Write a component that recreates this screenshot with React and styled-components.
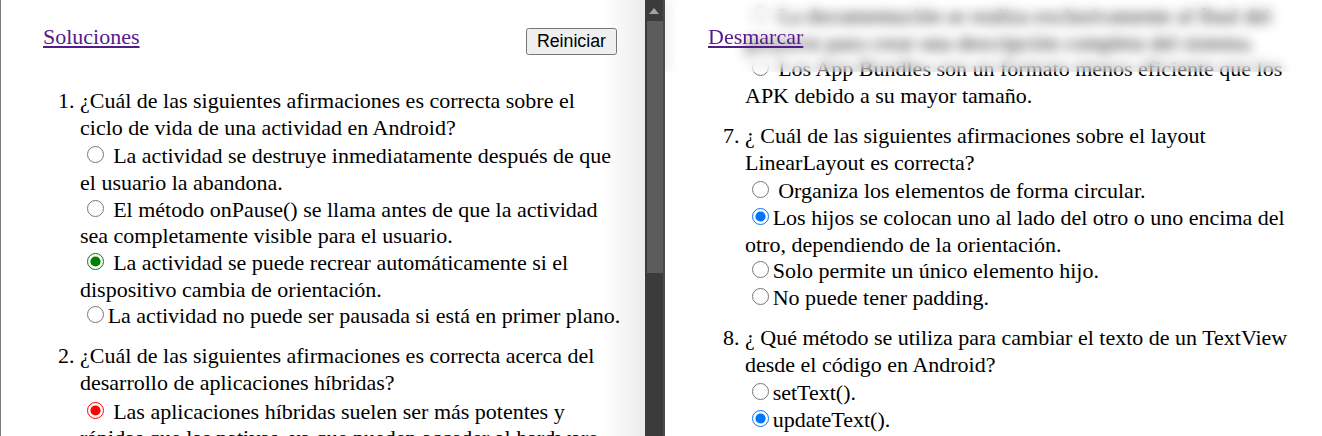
import React from "react";
import styled, { createGlobalStyle } from "styled-components";

const GlobalStyle = createGlobalStyle`
  html, body {
    margin: 0;
    padding: 0;
    background: #ffffff;
    overflow: hidden;
  }
  body {
    font-family: "Liberation Serif", "Times New Roman", serif;
    color: #000;
  }
`;

const Page = styled.div`
  display: flex;
  width: 1322px;
  height: 436px;
  overflow: hidden;
  background: #fff;
`;

const LeftPane = styled.section`
  flex: 0 0 645px;
  box-sizing: border-box;
  height: 100%;
  overflow: hidden;
  border-left: 1px solid #7d7d7d;
  padding: 0 24px 0 42px;
  background: linear-gradient(to right, #ffffff calc(100% - 42px), #ebebeb);
`;

const HeaderRow = styled.div`
  display: flex;
  justify-content: space-between;
  align-items: flex-start;
  padding: 24px 4px 0 0;
`;

const TextLink = styled.a`
  font-size: 22px;
  line-height: 26.67px;
  color: #551a8b;
  text-decoration: underline;
  cursor: pointer;
`;

const ResetButton = styled.button`
  margin-top: 4px;
  height: 27px;
  padding: 0 10px;
  font-family: "Liberation Sans", Arial, sans-serif;
  font-size: 17.78px;
  color: #000;
  background: #efefef;
  border: 1.33px solid #767676;
  border-radius: 2.67px;
`;

const QuestionList = styled.ol`
  margin: ${(p) => p.$top}px 0 0 0;
  padding-left: 37px;
  font-size: 22px;
  line-height: 26.67px;
`;

const Question = styled.li`
  margin-bottom: 13.33px;
  list-style: ${(p) => (p.$continued ? "none" : "decimal")};
`;

const Prompt = styled.div`
  margin-bottom: 2px;
`;

const Option = styled.label`
  display: block;
`;

const Radio = styled.input.attrs({ type: "radio" })`
  width: 17px;
  height: 17px;
  margin: 3px 4px 0 6.67px;
  accent-color: ${(p) => p.$accent || "auto"};
`;

const Scrollbar = styled.div`
  flex: 0 0 20px;
  display: flex;
  flex-direction: column;
  align-items: center;
  background: #3b3b3b;
  box-sizing: border-box;
  border-right: 2px solid #4a4a4a;
`;

const ArrowButton = styled.div`
  flex: 0 0 21px;
  width: 100%;
  display: flex;
  align-items: center;
  justify-content: center;
`;

const Thumb = styled.div`
  width: 16px;
  height: 252px;
  margin-left: 2px;
  background: #5c5c5c;
`;

const RightPane = styled.section`
  flex: 1 1 auto;
  position: relative;
  height: 100%;
  overflow: hidden;
  box-sizing: border-box;
  padding: 0 4px 0 43px;
`;

const BlurHeader = styled.div`
  position: absolute;
  top: 0;
  left: 0;
  right: 0;
  height: 72px;
  box-sizing: border-box;
  padding: 24px 0 0 43px;
  background: rgba(255, 255, 255, 0.08);
  backdrop-filter: blur(6px);
  -webkit-backdrop-filter: blur(6px);
  z-index: 2;
`;

const left = [
  {
    text: "¿Cuál de las siguientes afirmaciones es correcta sobre el ciclo de vida de una actividad en Android?",
    options: [
      { t: "La actividad se destruye inmediatamente después de que el usuario la abandona.", sp: true },
      { t: "El método onPause() se llama antes de que la actividad sea completamente visible para el usuario.", sp: true },
      { t: "La actividad se puede recrear automáticamente si el dispositivo cambia de orientación.", sp: true, checked: true, accent: "#008000" },
      { t: "La actividad no puede ser pausada si está en primer plano." },
    ],
  },
  {
    text: "¿Cuál de las siguientes afirmaciones es correcta acerca del desarrollo de aplicaciones híbridas?",
    options: [
      { t: "Las aplicaciones híbridas suelen ser más potentes y rápidas que las nativas, ya que pueden acceder al hardware del dispositivo sin restricciones.", sp: true, checked: true, accent: "#ff0000" },
      { t: "Las aplicaciones híbridas combinan tecnologías web con un contenedor nativo.", sp: true },
    ],
  },
];

const right = [
  {
    continued: true,
    options: [
      { t: "La documentación se realiza exclusivamente al final del proyecto para crear una descripción completa del sistema.", sp: true },
      { t: "Los App Bundles son un formato menos eficiente que los APK debido a su mayor tamaño.", sp: true },
    ],
  },
  {
    text: "¿ Cuál de las siguientes afirmaciones sobre el layout LinearLayout es correcta?",
    options: [
      { t: "Organiza los elementos de forma circular.", sp: true },
      { t: "Los hijos se colocan uno al lado del otro o uno encima del otro, dependiendo de la orientación.", checked: true },
      { t: "Solo permite un único elemento hijo." },
      { t: "No puede tener padding." },
    ],
  },
  {
    text: "¿ Qué método se utiliza para cambiar el texto de un TextView desde el código en Android?",
    options: [
      { t: "setText()." },
      { t: "updateText().", checked: true },
      { t: "changeText()." },
      { t: "modifyText()." },
    ],
  },
];

function QuestionItem({ q, name, value }) {
  return (
    <Question $continued={q.continued} value={value}>
      {q.text && <Prompt>{q.text}</Prompt>}
      {q.options.map((o, i) => (
        <Option key={i}>
          <Radio name={name} defaultChecked={!!o.checked} $accent={o.accent} />
          {o.sp ? " " : ""}
          {o.t}
        </Option>
      ))}
    </Question>
  );
}

export default function App() {
  return (
    <>
      <GlobalStyle />
      <Page>
        <LeftPane>
          <HeaderRow>
            <TextLink href="#soluciones">Soluciones</TextLink>
            <ResetButton type="button">Reiniciar</ResetButton>
          </HeaderRow>
          <QuestionList $top={33}>
            {left.map((q, i) => (
              <QuestionItem key={i} q={q} name={`l${i}`} value={i + 1} />
            ))}
          </QuestionList>
        </LeftPane>
        <Scrollbar>
          <ArrowButton>
            <svg width="10" height="6" viewBox="0 0 10 6">
              <polygon points="0,6 10,6 5,0" fill="#a3a3a3" />
            </svg>
          </ArrowButton>
          <Thumb />
        </Scrollbar>
        <RightPane>
          <BlurHeader>
            <TextLink href="#desmarcar">Desmarcar</TextLink>
          </BlurHeader>
          <QuestionList $top={3}>
            {right.map((q, i) => (
              <QuestionItem key={i} q={q} name={`r${i}`} value={i + 6} />
            ))}
          </QuestionList>
        </RightPane>
      </Page>
    </>
  );
}
